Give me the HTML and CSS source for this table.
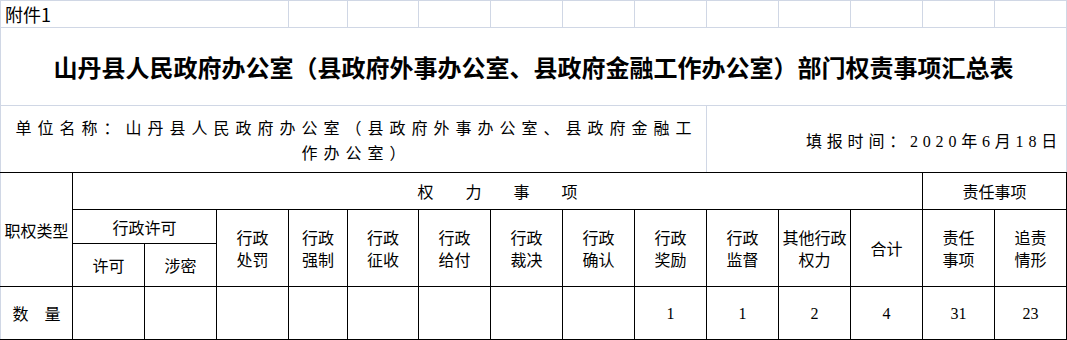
FILE: index.html
```html
<!DOCTYPE html>
<html lang="zh-CN">
<head>
<meta charset="utf-8">
<title>部门权责事项汇总表</title>
<link rel="stylesheet" href="styles.css">
</head>
<body>
<table class="sheet">
  <colgroup>
    <col class="c72"><col class="c72"><col class="c72"><col class="c72"><col class="c59"><col class="c71"><col class="c72"><col class="c72"><col class="c72"><col class="c72"><col class="c72"><col class="c72"><col class="c72"><col class="c72"><col class="c72">
  </colgroup>
  <tr class="r-note">
    <td class="g note" colspan="4">附件1</td>
    <td class="g"></td><td class="g"></td><td class="g"></td><td class="g"></td><td class="g"></td><td class="g"></td><td class="g"></td><td class="g"></td><td class="g"></td><td class="g"></td><td class="g"></td>
  </tr>
  <tr class="r-title">
    <td class="g title" colspan="15">山丹县人民政府办公室（县政府外事办公室、县政府金融工作办公室）部门权责事项汇总表</td>
  </tr>
  <tr class="r-unit">
    <td class="g gb unit" colspan="10">单位名称：山丹县人民政府办公室（县政府外事办公室、县政府金融工<br>作办公室）</td>
    <td class="g gb date" colspan="5">填报时间：2020年6月18日</td>
  </tr>
  <tr class="r-h1">
    <td class="b first" rowspan="3">职权类型</td>
    <td class="b spaced" colspan="12">权　　力　　事　　项</td>
    <td class="b" colspan="2">责任事项</td>
  </tr>
  <tr class="r-h2">
    <td class="b" colspan="2">行政许可</td>
    <td class="b two" rowspan="2">行政<br>处罚</td>
    <td class="b two" rowspan="2">行政<br>强制</td>
    <td class="b two" rowspan="2">行政<br>征收</td>
    <td class="b two" rowspan="2">行政<br>给付</td>
    <td class="b two" rowspan="2">行政<br>裁决</td>
    <td class="b two" rowspan="2">行政<br>确认</td>
    <td class="b two" rowspan="2">行政<br>奖励</td>
    <td class="b two" rowspan="2">行政<br>监督</td>
    <td class="b two" rowspan="2">其他行政<br>权力</td>
    <td class="b" rowspan="2">合计</td>
    <td class="b two" rowspan="2">责任<br>事项</td>
    <td class="b two last" rowspan="2">追责<br>情形</td>
  </tr>
  <tr class="r-h3">
    <td class="b">许可</td>
    <td class="b">涉密</td>
  </tr>
  <tr class="r-data">
    <td class="b first">数　量</td>
    <td class="b num"></td>
    <td class="b num"></td>
    <td class="b num"></td>
    <td class="b num"></td>
    <td class="b num"></td>
    <td class="b num"></td>
    <td class="b num"></td>
    <td class="b num"></td>
    <td class="b num">1</td>
    <td class="b num">1</td>
    <td class="b num">2</td>
    <td class="b num">4</td>
    <td class="b num">31</td>
    <td class="b num last">23</td>
  </tr>
</table>
</body>
</html>
```

FILE: styles.css
```css
html, body {
  margin: 0;
  padding: 0;
  background: #ffffff;
}

body {
  font-family: "Noto Sans CJK SC", sans-serif;
  color: #000;
}

.sheet {
  border-collapse: collapse;
  table-layout: fixed;
  width: 1067px;
}

.c72 { width: 72px; }
.c59 { width: 59px; }
.c71 { width: 71px; }

.sheet td {
  padding: 0;
  text-align: center;
  vertical-align: middle;
  overflow: hidden;
  white-space: nowrap;
}

.g {
  border: 1px solid #d0d7e5;
}

.gb {
  border-bottom: 1px solid #000 !important;
}

.b {
  border: 1px solid #000;
  font-size: 16px;
  line-height: 20px;
}

.b.two {
  line-height: 22px;
}

.b.first {
  border-left: 1px solid #d0d7e5;
}

.r-note { height: 27px; }
.r-title { height: 78px; }
.r-unit { height: 67px; }
.r-h1 { height: 37px; }
.r-h2 { height: 34px; }
.r-h3 { height: 43px; }
.r-data { height: 53px; }

.note {
  text-align: left !important;
  padding-left: 4px !important;
  font-size: 18px;
  line-height: 22px;
}

.title {
  font-size: 24px;
  font-weight: 700;
  line-height: 30px;
}

.unit {
  font-size: 16px;
  line-height: 25px;
  letter-spacing: 6px;
  padding-left: 6px !important;
  padding-top: 2px !important;
}

.date {
  text-align: right !important;
  font-family: "Liberation Serif", "Noto Sans CJK SC", serif;
  font-size: 16px;
  letter-spacing: 4.8px;
  padding-right: 4px !important;
  padding-top: 2px !important;
}

.num {
  font-family: "Liberation Serif", serif;
  font-size: 16px;
  padding-top: 2px !important;
}
```
